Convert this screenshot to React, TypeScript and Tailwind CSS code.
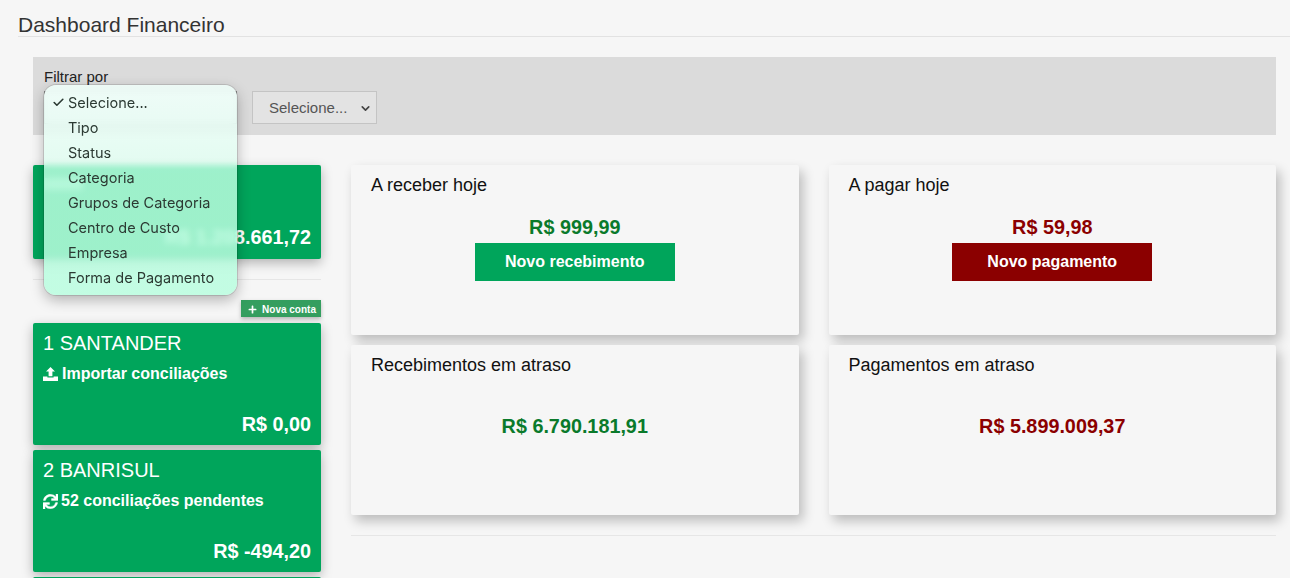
import React from "react";
import { FaPlus, FaSync } from "react-icons/fa";
import { Check, ChevronDown } from "lucide-react";

const filterOptions = [
  "Selecione...",
  "Tipo",
  "Status",
  "Categoria",
  "Grupos de Categoria",
  "Centro de Custo",
  "Empresa",
  "Forma de Pagamento",
];

function UploadIcon() {
  return (
    <svg viewBox="0 0 15 14" className="w-[15px] h-[14px] mr-[1px] fill-white shrink-0">
      <path d="M7.5 0 L12 4.6 H9.4 V9.2 H5.6 V4.6 H3 Z" />
      <path d="M0 9.4 H4.4 V10.4 H10.6 V9.4 H15 V14 H0 Z" />
    </svg>
  );
}

function AccountCard({
  name,
  action,
  icon,
  balance,
}: {
  name: string;
  action: string;
  icon: React.ReactNode;
  balance: string;
}) {
  return (
    <div className="h-[122px] bg-[#00a55b] rounded-[2px] text-white px-[10px] pt-[8px] flex flex-col shadow-[0_4px_12px_rgba(0,0,0,0.28)]">
      <div className="text-[20px] leading-[24px]">{name}</div>
      <div className="flex items-center gap-[3px] mt-[10px] text-[16px] leading-[18px] font-bold">
        {icon}
        <span>{action}</span>
      </div>
      <div className="mt-auto mb-[10px] text-right text-[19.8px] leading-[22px] font-bold">{balance}</div>
    </div>
  );
}

function SummaryCard({
  title,
  value,
  valueColor,
  button,
  buttonColor,
}: {
  title: string;
  value: string;
  valueColor: string;
  button?: string;
  buttonColor?: string;
}) {
  return (
    <div className="h-[170px] bg-[#f6f6f6] rounded-[2px] px-[20px] pt-[10px] shadow-[4px_6px_12px_rgba(0,0,0,0.24)]">
      <div className="text-[18px] leading-[20px] text-[#111]">{title}</div>
      <div className="flex flex-col items-center">
        <div className={`${valueColor} text-[19.8px] leading-[22px] font-bold ${button ? "mt-[21px]" : "mt-[40px]"}`}>{value}</div>
        {button && (
          <div className={`${buttonColor} w-[200px] h-[38px] mt-[5px] flex items-center justify-center text-white text-[16px] font-bold`}>
            {button}
          </div>
        )}
      </div>
    </div>
  );
}

export default function App() {
  return (
    <div className="relative h-[578px] w-[1290px] overflow-hidden bg-[#f6f6f6] font-['Liberation_Sans',Arial,sans-serif]">
      {/* Title */}
      <div className="ml-[18px] h-[37px] border-b border-[#e2e2e2] pt-[13px] text-[21px] leading-[24px] text-[#333]">
        Dashboard Financeiro
      </div>

      <div className="ml-[33px] mr-[14px] mt-[20px]">
        {/* Filter bar */}
        <div className="h-[78px] bg-[#dbdbdb] pl-[11px] pt-[12px] text-[15px] text-[#222]">
          <div className="leading-[16px]">Filtrar por</div>
          <div className="flex mt-[6px]">
            <div className="w-[193px] h-[33px] border border-[#8a8a8a] bg-[#ececec]" />
            <div className="ml-[15px] w-[125px] h-[33px] border border-[#c4c4c4] bg-[#e3e3e3] flex items-center justify-between pl-[16px] pr-[4px] pt-[1px] text-[#555] text-[15px]">
              <span>Selecione...</span>
              <ChevronDown size={13} strokeWidth={3} className="text-[#444]" />
            </div>
          </div>
        </div>

        <div className="flex mt-[30px]">
          {/* Accounts column */}
          <div className="w-[288px] shrink-0">
            <div className="h-[94px] bg-[#00a55b] rounded-[2px] flex flex-col justify-between text-white px-[10px] pt-[13px] pb-[11px] shadow-[0_4px_12px_rgba(0,0,0,0.28)]">
              {/* label is unreadable behind the menu, only its smear shows */}
              <div className="ml-[2px] w-[38px] h-[12px] bg-white/60" />
              <div className="text-right text-[19.8px] leading-[22px] font-bold">R$ 1.208.661,72</div>
            </div>
            <div className="mt-[20px] border-t border-[#e6e6e6]" />
            <div className="flex justify-end mt-[20px]">
              <div className="w-[80px] h-[17px] bg-[#349e5f] flex items-center justify-center gap-[5px] pl-[2px] pt-[1px] text-white text-[10px] font-bold shadow-[0_2px_4px_rgba(0,0,0,0.25)]">
                <FaPlus size={9} />
                <span>Nova conta</span>
              </div>
            </div>
            <div className="mt-[6px] flex flex-col gap-[5px]">
              <AccountCard name="1 SANTANDER" action="Importar conciliações" icon={<UploadIcon />} balance="R$ 0,00" />
              <AccountCard
                name="2 BANRISUL"
                action="52 conciliações pendentes"
                icon={<FaSync size={15} stroke="currentColor" strokeWidth={12} />}
                balance="R$ -494,20"
              />
              <div className="h-[40px] bg-[#00a55b] rounded-[2px]" />
            </div>
          </div>

          {/* Summary cards */}
          <div className="ml-[30px] flex-1">
            <div className="grid grid-cols-2 gap-x-[30px] gap-y-[10px]">
              <SummaryCard title="A receber hoje" value="R$ 999,99" valueColor="text-[#0a7a2b]" button="Novo recebimento" buttonColor="bg-[#00a55b]" />
              <SummaryCard title="A pagar hoje" value="R$ 59,98" valueColor="text-[#8b0000]" button="Novo pagamento" buttonColor="bg-[#8b0000]" />
              <SummaryCard title="Recebimentos em atraso" value="R$ 6.790.181,91" valueColor="text-[#0a7a2b]" />
              <SummaryCard title="Pagamentos em atraso" value="R$ 5.899.009,37" valueColor="text-[#8b0000]" />
            </div>
            <div className="mt-[20px] border-t border-[#e6e6e6]" />
          </div>
        </div>
      </div>

      {/* Open native select menu, translucent over the page */}
      <div className="absolute left-[44px] top-[85px] w-[193px] h-[210px] rounded-[12px] overflow-hidden shadow-[0_0_0_1px_rgba(0,0,0,0.12),0_5px_14px_rgba(0,0,0,0.28)] backdrop-blur-[3px] bg-[linear-gradient(180deg,#f0fffad9_0px,#e0fcf0d9_76px,#b9fddfd9_84px)] pt-[5px] font-['Inter',sans-serif] text-[14.5px] text-[#2c3a33]">
        {filterOptions.map((opt, i) => (
          <div key={opt} className="relative h-[25px] pl-[24px] leading-[25px]">
            {i === 0 && <Check size={13} strokeWidth={3} className="absolute left-[8px] top-[6px]" />}
            {opt}
          </div>
        ))}
      </div>
    </div>
  );
}
